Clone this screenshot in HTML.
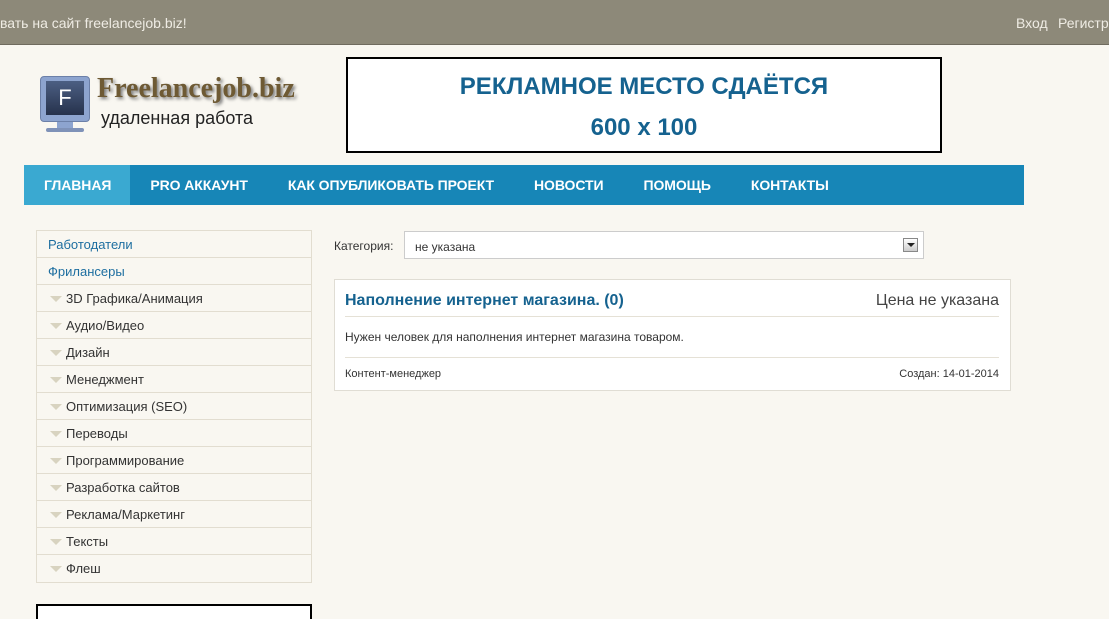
<!DOCTYPE html>
<html><head><meta charset="utf-8"><style>
*{margin:0;padding:0;box-sizing:border-box}
html,body{width:1109px;height:619px;overflow:hidden}
body{background:#f9f7f1;font-family:"Liberation Sans",sans-serif;position:relative}
.top{position:absolute;left:0;top:0;width:1109px;height:45px;background:#8d8979;border-bottom:1px solid #6f6b5e}
.top span{position:absolute;top:15px;font-size:14px;color:#efece4}
.logo{position:absolute;left:40px;top:76px;width:50px;height:58px}
.mon{position:absolute;left:0;top:0;width:50px;height:46px;background:#8da4cf;border-radius:4px;border:1px solid #6c80a8}
.scr{position:absolute;left:5px;top:4px;width:38px;height:34px;background:linear-gradient(#4c5f83,#26324c);color:#fff;font-size:22px;text-align:center;line-height:34px}
.stand{position:absolute;left:17px;top:46px;width:16px;height:6px;background:#8da4cf}
.base{position:absolute;left:6px;top:52px;width:38px;height:4px;background:#7f92b8;border-radius:2px}
.brand{position:absolute;left:97px;top:73px;font-family:"Liberation Serif",serif;font-weight:bold;font-size:28px;color:#6e5a34;text-shadow:2px 2px 3px #777}
.sub{position:absolute;left:101px;top:108px;font-size:18px;color:#222}
.ad{position:absolute;left:346px;top:57px;width:596px;height:96px;border:2px solid #000;background:#fff;text-align:center;color:#15628f;font-weight:bold;font-size:24px}
.nav{position:absolute;left:24px;top:165px;width:1000px;height:40px;background:#1786b7}
.nav a{float:left;height:40px;line-height:40px;padding:0 20px;color:#fff;font-weight:bold;font-size:14px;text-decoration:none;letter-spacing:-0.08px}
.nav a.on{background:#3aa9d1;padding:0 19px 0 20px}
.side{position:absolute;left:36px;top:230px;width:276px;border:1px solid #e2ddd0;background:#f9f7f1}
.side div{height:27px;line-height:27px;border-bottom:1px solid #e2ddd0;font-size:13px;color:#333;padding-left:29px;position:relative}
.side div:last-child{border-bottom:0}
.side div.l{color:#1d6ea0;padding-left:11px}
.side div:not(.l):before{content:"";position:absolute;left:13px;top:11px;border-left:6px solid transparent;border-right:6px solid transparent;border-top:6px solid #d8d3c0}
.box2{position:absolute;left:36px;top:604px;width:276px;height:30px;border:2px solid #000;background:#fff}
.cat{position:absolute;left:334px;top:239px;font-size:12px;color:#333}
.sel{position:absolute;left:404px;top:231px;width:520px;height:28px;border:1px solid #ccc;background:#fff;font-size:12px;color:#333;padding:8px 10px}
.arr{position:absolute;right:5px;top:6px;width:15px;height:14px;border:1px solid #888;background:linear-gradient(#fff,#ccc)}
.arr:after{content:"";position:absolute;left:3px;top:4px;border-left:4px solid transparent;border-right:4px solid transparent;border-top:4px solid #222}
.card{position:absolute;left:334px;top:279px;width:677px;height:112px;border:1px solid #e0ddd4;background:#fff}
.t{position:absolute;left:10px;top:12px;font-size:16px;font-weight:bold;color:#15628f}
.p{position:absolute;right:11px;top:12px;font-size:16px;color:#444}
.hr{position:absolute;left:10px;right:11px;height:1px;background:#e5e1d6}
.d{position:absolute;left:10px;top:50px;font-size:12px;color:#333}
.f1{position:absolute;left:10px;top:88px;font-size:11px;color:#333}
.f2{position:absolute;right:11px;top:88px;font-size:11px;color:#333}
</style></head><body>
<div class="top"><span style="left:0">вать на сайт freelancejob.biz!</span><span style="left:1016px">Вход</span><span style="left:1058px">Регистр</span></div>
<div class="logo"><div class="mon"><div class="scr">F</div></div><div class="stand"></div><div class="base"></div></div>
<div class="brand">Freelancejob.biz</div>
<div class="sub">удаленная работа</div>
<div class="ad"><div style="margin-top:14px">РЕКЛАМНОЕ МЕСТО СДАЁТСЯ</div><div style="margin-top:13px">600 x 100</div></div>
<div class="nav"><a class="on">ГЛАВНАЯ</a><a>PRO АККАУНТ</a><a>КАК ОПУБЛИКОВАТЬ ПРОЕКТ</a><a>НОВОСТИ</a><a>ПОМОЩЬ</a><a>КОНТАКТЫ</a></div>
<div class="side">
<div class="l">Работодатели</div><div class="l">Фрилансеры</div>
<div>3D Графика/Анимация</div><div>Аудио/Видео</div><div>Дизайн</div><div>Менеджмент</div><div>Оптимизация (SEO)</div><div>Переводы</div><div>Программирование</div><div>Разработка сайтов</div><div>Реклама/Маркетинг</div><div>Тексты</div><div>Флеш</div>
</div>
<div class="box2"></div>
<div class="cat">Категория:</div>
<div class="sel">не указана<div class="arr"></div></div>
<div class="card">
<div class="t">Наполнение интернет магазина. (0)</div><div class="p">Цена не указана</div>
<div class="hr" style="top:36px"></div>
<div class="d">Нужен человек для наполнения интернет магазина товаром.</div>
<div class="hr" style="top:77px"></div>
<div class="f1">Контент-менеджер</div><div class="f2">Создан: 14-01-2014</div>
</div>
</body></html>
